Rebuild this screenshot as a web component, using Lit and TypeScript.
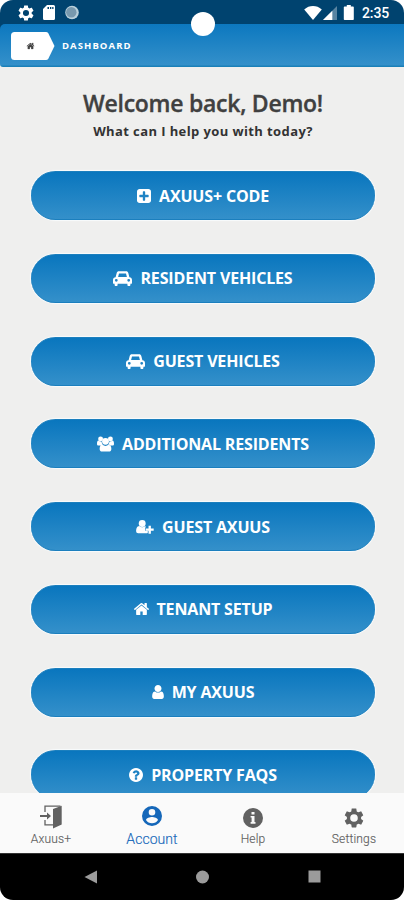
import { LitElement, html, css, svg } from "lit";
import { customElement } from "lit/decorators.js";

const gear = svg`<path fill-rule="evenodd" d="M19.43 12.98c.04-.32.07-.64.07-.98s-.03-.66-.07-.98l2.11-1.65c.19-.15.24-.42.12-.64l-2-3.46c-.12-.22-.39-.3-.61-.22l-2.49 1c-.52-.4-1.08-.73-1.69-.98l-.38-2.65C14.46 2.18 14.25 2 14 2h-4c-.25 0-.46.18-.49.42l-.38 2.65c-.61.25-1.17.59-1.69.98l-2.49-1c-.23-.09-.49 0-.61.22l-2 3.46c-.13.22-.07.49.12.64l2.11 1.65c-.04.32-.07.65-.07.98s.03.66.07.98l-2.11 1.65c-.19.15-.24.42-.12.64l2 3.46c.12.22.39.3.61.22l2.49-1c.52.4 1.08.73 1.69.98l.38 2.65c.03.24.24.42.49.42h4c.25 0 .46-.18.49-.42l.38-2.65c.61-.25 1.17-.59 1.69-.98l2.49 1c.23.09.49 0 .61-.22l2-3.46c.12-.22.07-.49-.12-.64l-2.11-1.65zM12 16a4 4 0 1 1 0-8 4 4 0 0 1 0 8z"/>`;
const house = svg`<path d="M1472 992v480q0 26-19 45t-45 19h-384v-384h-256v384h-384q-26 0-45-19t-19-45v-480q0-1 .5-3t.5-3l575-474 575 474q1 2 1 6zm223-69l-62 74q-8 9-21 11h-3q-13 0-21-7l-692-577-692 577q-12 8-24 7-13-2-21-11l-62-74q-8-10-7-23.5t11-21.5l719-599q32-26 76-26t76 26l244 204v-195q0-14 9-23t23-9h192q14 0 23 9t9 23v408l219 182q10 8 11 21.5t-7 23.5z"/>`;
const plusSquare = svg`<path d="M1408 960v-128q0-26-19-45t-45-19h-320v-320q0-26-19-45t-45-19h-128q-26 0-45 19t-19 45v320h-320q-26 0-45 19t-19 45v128q0 26 19 45t45 19h320v320q0 26 19 45t45 19h128q26 0 45-19t19-45v-320h320q26 0 45-19t19-45zm256-544v960q0 119-84.5 203.5t-203.5 84.5h-960q-119 0-203.5-84.5t-84.5-203.5v-960q0-119 84.5-203.5t203.5-84.5h960q119 0 203.5 84.5t84.5 203.5z"/>`;
const question = svg`<path d="M1024 1376v-192q0-14-9-23t-23-9h-192q-14 0-23 9t-9 23v192q0 14 9 23t23 9h192q14 0 23-9t9-23zm256-672q0-88-55.5-163t-138.5-116-170-41q-243 0-371 213-15 24 8 42l132 100q7 6 19 6 16 0 25-12 53-68 86-92 34-24 86-24 48 0 85.5 26t37.5 59q0 38-20 61t-68 45q-63 28-115.5 86.5t-52.5 125.5v36q0 14 9 23t23 9h192q14 0 23-9t9-23q0-19 21.5-49.5t54.5-49.5q32-18 49-28.5t46-35 44.5-48 28-60.5 12.5-81zm384 192q0 209-103 385.5t-279.5 279.5-385.5 103-385.5-103-279.5-279.5-103-385.5 103-385.5 279.5-279.5 385.5-103 385.5 103 279.5 279.5 103 385.5z"/>`;
const user = svg`<path d="M1536 1399q0 109-62.5 187t-150.5 78h-854q-88 0-150.5-78t-62.5-187q0-85 8.5-160.5t31.5-152 58.5-131 94-89 134.5-34.5q131 128 313 128t313-128q76 0 134.5 34.5t94 89 58.5 131 31.5 152 8.5 160.5zm-256-887q0 159-112.5 271.5t-271.5 112.5-271.5-112.5-112.5-271.5 112.5-271.5 271.5-112.5 271.5 112.5 112.5 271.5z"/>`;
const car = svg`<path fill-rule="evenodd" d="M5.8.3h7.4c1 0 1.8.6 2.1 1.6l1.1 4.3c1.6.2 2.6 1.2 2.6 2.7v3.3c0 .3-.2.5-.5.5h-1.1v1c0 1-.6 1.7-1.5 1.7s-1.5-.7-1.5-1.7v-1H4.6v1c0 1-.6 1.7-1.5 1.7s-1.5-.7-1.5-1.7v-1H.5c-.3 0-.5-.2-.5-.5V8.900c0-1.500 1-2.500 2.600-2.700l1.100-4.300C4 .9 4.800.3 5.800.3zM6 2.500 5.100 6h8.800L13 2.500zM3.300 7.900a1.400 1.400 0 1 0 0 2.800 1.400 1.400 0 0 0 0-2.800zm12.400 0a1.400 1.400 0 1 0 0 2.800 1.400 1.400 0 0 0 0-2.800z"/>`;
const group = svg`<circle cx="3.800" cy="2.600" r="2.600"/><circle cx="14.200" cy="2.600" r="2.600"/><circle cx="9" cy="5.200" r="3.600"/><path d="M1.600 4.300C.4 4.300 0 6 0 7.900 0 9.100.7 9.700 1.600 9.700h2.500c.5-.7 1.100-1.100 1.900-1.300A4.400 4.400 0 0 1 4.900 5.300C3.600 5.500 2.500 5 1.600 4.300zM16.400 4.300c1.200 0 1.600 1.700 1.600 3.600 0 1.200-.7 1.800-1.600 1.800h-2.500c-.5-.7-1.100-1.100-1.900-1.300a4.400 4.400 0 0 0 1.100-3.100c1.300.2 2.400-.3 3.300-1zM5.600 8.500c-1.900.2-2.800 2.200-2.800 4.700C2.800 14.900 3.900 16 5.400 16h7.200c1.500 0 2.600-1.100 2.600-2.800 0-2.500-.9-4.500-2.800-4.700a5 5 0 0 1-6.800 0z"/>`;
const userPlus = svg`<circle cx="6.500" cy="3.700" r="3.700"/><path d="M3.400 6.400C.8 6.600 0 9.500 0 11.900 0 13.400.9 14.300 2.200 14.300h8.700c.7 0 1.200-.2 1.600-.6v-2.200H9.700V8.700c0-.6.3-1 .8-1.200l-.9-1.100a4.600 4.600 0 0 1-6.200 0z"/><path d="M13.300 6.200h2.500v2.900h3v2.500h-3v3h-2.500v-3h-3V9.100h3z"/>`;

const actions = [
  { label: "AXUUS+ CODE", icon: plusSquare, box: "128 128 1536 1536", w: 14, h: 14 },
  { label: "RESIDENT VEHICLES", icon: car, box: "0 0 19 15", w: 19, h: 15 },
  { label: "GUEST VEHICLES", icon: car, box: "0 0 19 15", w: 19, h: 15 },
  { label: "ADDITIONAL RESIDENTS", icon: group, box: "0 0 18 16", w: 17, h: 16 },
  { label: "GUEST AXUUS", icon: userPlus, box: "0 0 19 15", w: 18, h: 14 },
  { label: "TENANT SETUP", icon: house, box: "90 250 1612 1290", w: 15, h: 12 },
  { label: "MY AXUUS", icon: user, box: "256 128 1280 1536", w: 12, h: 14 },
  { label: "PROPERTY FAQS", icon: question, box: "128 128 1536 1536", w: 14, h: 14 },
];

const tabs = [
  {
    label: "Axuus+", cls: "door",
    icon: html`<svg width="24" height="25" viewBox="0 0 24 25"><path d="M6 8V2.200h15.500M6 16v4.800h8" fill="none" stroke="currentColor" stroke-width="1.300"/><path d="M14 5 22.700 1.800v18.700L14 24.500z"/><path d="M1 11h7V8.500l4 3.500-4 3.500V13H1z"/></svg>`,
  },
  {
    label: "Account", cls: "active",
    icon: html`<svg width="24" height="24" viewBox="0 0 24 24"><path fill-rule="evenodd" d="M12 2a10 10 0 1 0 0 20 10 10 0 0 0 0-20zm0 3a3.300 3.300 0 1 1 0 6.600A3.300 3.300 0 0 1 12 5zm0 14.200a7.200 7.200 0 0 1-6-3.200c0-2 4-3.100 6-3.100s6 1.100 6 3.100a7.200 7.200 0 0 1-6 3.200z"/></svg>`,
  },
  {
    label: "Help", cls: "",
    icon: html`<svg width="24" height="24" viewBox="0 0 24 24"><circle cx="12" cy="12" r="10"/><path class="cut" d="M10.500 6h3v2.500h-3zM9.600 10h3.900v6h1v1.700H9.600V16h1v-4.400h-1z"/></svg>`,
  },
  { label: "Settings", cls: "", icon: html`<svg width="24" height="24" viewBox="0 0 24 24"><g transform="translate(.6 .6) scale(.95)">${gear}</g></svg>` },
];

@customElement("app-root")
export class AppRoot extends LitElement {
  static styles = css`
    :host { display: block; width: 404px; height: 900px; background: #fff; }
    * { box-sizing: border-box; }
    svg { display: block; fill: currentColor; flex: none; }
    .screen { position: relative; display: flex; flex-direction: column; height: 900px; overflow: hidden;
      border-radius: 13px; background: #efefee; font-family: "Open Sans", "Noto Sans", sans-serif; }
    .status { height: 24px; flex: none; display: flex; align-items: center; background: #00436f; color: #fff; padding: 1px 14px 0 18px; }
    .left { display: flex; align-items: center; gap: 9px; }
    .right { display: flex; align-items: center; margin-left: auto; }
    .time { font: 500 14px/16px Roboto, sans-serif; margin-left: 7px; width: 28px; white-space: nowrap; letter-spacing: -.1px; }
    .camera { position: absolute; left: 191px; top: 12px; width: 24px; height: 24px; border-radius: 50%; background: #fff; }
    .top { background: linear-gradient(#00436f 50%, #efefee 50%); flex: none; }
    .header { height: 43px; display: flex; align-items: center; padding-left: 11px;
      background: linear-gradient(#0c78bf, #3490ca 96%, #1a80b8 97%); color: #fff; border-radius: 5px 0 0 3px; }
    .crumb { color: #444; }
    .title { font-size: 9.500px; font-weight: 700; letter-spacing: 1.080px; line-height: 14px; margin-left: 7px; white-space: nowrap; }
    .main { flex: 1; min-height: 0; overflow: hidden; display: flex; flex-direction: column; align-items: center; padding: 20px 0 0 2px; }
    h1 { margin: 0; font-size: 23px; line-height: 32px; font-weight: 600; color: #404040; -webkit-text-stroke: .35px #404040; white-space: nowrap; letter-spacing: -.270px; }
    .sub { font-size: 13px; line-height: 20px; height: 20px; margin: 2px 0 0; font-weight: 700; color: #333; white-space: nowrap; letter-spacing: .4px; }
    .list { display: flex; flex-direction: column; gap: 33.750px; margin-top: 30px; width: 344px; }
    .action { height: 49px; flex: none; border-radius: 25px; display: flex; align-items: center; justify-content: center;
      background: linear-gradient(#0976be, #3490ca); color: #fff; border: solid #1b7fbe; border-width: 1px 0; box-shadow: 0 0 1px 1px #f8fbfc; gap: 8px; }
    .label { font-size: 16px; line-height: 22px; font-weight: 700; white-space: nowrap; letter-spacing: -.16px; }
    .tabs { height: 60px; flex: none; display: grid; grid-template-columns: repeat(4, 101px); background: #fafafa; color: #616161; }
    .tab { display: flex; flex-direction: column; align-items: center; padding: 13px 0 0 1px; }
    .tab.door, .tab.active { padding-top: 11px; }
    .name { font: 300 12px/16px Roboto, sans-serif; margin-top: 1px; letter-spacing: .15px; -webkit-text-stroke: .15px currentColor; }
    .door .name { margin-top: 2px; }
    .active { color: #1567b9; }
    .active .name { font-size: 14px; margin-top: 3px; letter-spacing: .05px; }
    .cut { fill: #fafafa; }
    .nav { height: 47px; flex: none; display: flex; align-items: center; justify-content: center; background: #000; color: #9b9b9b; gap: 99px; border-top: 1px solid #333; padding-bottom: 1px; }
  `;

  render() {
    return html`
      <div class="screen">
        <div class="status">
          <div class="left">
            <svg width="16" height="16" viewBox="1.500 1.500 21 21">${gear}</svg>
            <svg width="12" height="15" viewBox="0 0 12 15"><path fill-rule="evenodd" d="M4 0h6.500Q12 0 12 1.500v12q0 1.500-1.500 1.500h-9Q0 15 0 13.500V4zM4.500 2v2H6V2zM7 2v2h1.300V2zM9.200 2v2h1.300V2z"/></svg>
            <svg width="15" height="15" viewBox="0 0 15 15"><circle cx="8" cy="7.500" r="6.800" fill="#b9d0db"/><circle cx="7.300" cy="7.200" r="5.200" fill="#7899ae"/></svg>
          </div>
          <div class="right">
            <svg width="18" height="14" viewBox="0 0 18 14"><path d="M9 14 .2 3.500Q4.200.1 9 .1t8.800 3.400z"/></svg>
            <svg width="15" height="14" viewBox="-1 0 15 14"><path d="M14 0v14H0z" opacity=".35"/><path d="M9.300 4.700V14H0z"/></svg>
            <svg width="18" height="15" viewBox="-6.500 0 18 15"><path d="M3.300 0h4v1.500h2.200q.8 0 .8.800v11.900q0 .8-.8.800H1.100q-.8 0-.8-.8V2.300q0-.8.800-.8h2.200z"/></svg>
            <span class="time">2:35</span>
          </div>
        </div>
        <div class="top">
          <div class="header">
            <svg class="crumb" width="44" height="28" viewBox="0 0 44 28"><path fill="#fff" d="M3.500 0H35q1.500 0 2.300 1.200L43.500 14l-6.200 12.800Q36.500 28 35 28H3.500Q0 28 0 24.500v-21Q0 0 3.500 0z"/><svg x="15.500" y="10.500" width="8" height="7" viewBox="90 250 1612 1290">${house}</svg></svg>
            <span class="title">DASHBOARD</span>
          </div>
        </div>
        <div class="main">
          <h1>Welcome back, Demo!</h1>
          <p class="sub">What can I help you with today?</p>
          <div class="list">
            ${actions.map((a) => html`<div class="action">
              <svg width=${a.w} height=${a.h} viewBox=${a.box}>${a.icon}</svg>
              <span class="label">${a.label}</span>
            </div>`)}
          </div>
        </div>
        <div class="tabs">
          ${tabs.map((t) => html`<div class="tab ${t.cls}">${t.icon}<span class="name">${t.label}</span></div>`)}
        </div>
        <div class="nav">
          <svg width="13" height="14" viewBox="0 0 13 14"><path d="M13 .5v13L.5 7z"/></svg>
          <svg width="13" height="14" viewBox="0 0 13 14"><circle cx="6.500" cy="7" r="6.500"/></svg>
          <svg width="13" height="13" viewBox="0 0 13 13"><path d="M.5.500h12v12H.5z"/></svg>
        </div>
        <div class="camera"></div>
      </div>`;
  }
}
